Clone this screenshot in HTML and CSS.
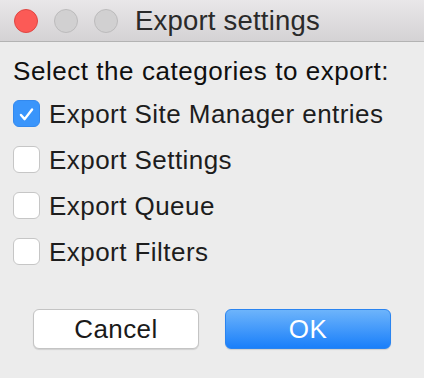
FILE: index.html
```html
<!DOCTYPE html>
<html lang="en">
<head>
  <meta charset="UTF-8" />
  <title>Export settings</title>
  <link rel="stylesheet" href="styles.css">
</head>
<body>
  <div class="window">
    <div class="titlebar">
      <div class="lights">
        <span class="light close"></span>
        <span class="light"></span>
        <span class="light"></span>
      </div>
      <div class="title">Export settings</div>
    </div>

    <div class="content">
      <p class="prompt">Select the categories to export:</p>
      <label class="option">
        <span class="box checked">
          <svg viewBox="0 0 27 27" width="27" height="27"><path d="M7.5 14 L11.5 18.5 L19.5 8" fill="none" stroke="#fff" stroke-width="2.6" stroke-linecap="round" stroke-linejoin="round"/></svg>
        </span>
        Export Site Manager entries
      </label>
      <label class="option"><span class="box"></span>Export Settings</label>
      <label class="option"><span class="box"></span>Export Queue</label>
      <label class="option"><span class="box"></span>Export Filters</label>

      <div class="buttons">
        <button class="btn">Cancel</button>
        <button class="btn primary">OK</button>
      </div>
    </div>
  </div>
</body>
</html>
```

FILE: styles.css
```css
* {
  box-sizing: border-box;
}

body {
  margin: 0;
  background: #ececec;
  font-family: 'Liberation Sans', Arial, sans-serif;
  color: #1f1f1f;
}

.window {
  width: 424px;
  height: 378px;
  background: #ececec;
  display: flex;
  flex-direction: column;
}

.titlebar {
  height: 42px;
  background: linear-gradient(#e9e7e9, #d4d2d4);
  border-bottom: 1px solid #b3b3b3;
  display: flex;
  align-items: center;
  padding-left: 14px;
}

.lights {
  display: flex;
  gap: 16px;
}

.light {
  width: 24px;
  height: 24px;
  border-radius: 50%;
  background: #d1d0d1;
  border: 1px solid #bcbbbc;
}

.light.close {
  background: #fc5a56;
  border-color: #df4642;
}

.title {
  margin-left: 17px;
  font-size: 27.5px;
  letter-spacing: 0.2px;
  color: #2a2a2a;
}

.content {
  flex: 1;
  padding: 14px 0 0 13px;
}

.prompt {
  margin: 0 0 14px;
  font-size: 26px;
  line-height: 30px;
  letter-spacing: 0.55px;
  color: #0f0f0f;
}

.option {
  display: flex;
  align-items: center;
  gap: 9px;
  height: 27px;
  margin-bottom: 19px;
  font-size: 26px;
  line-height: 30px;
  letter-spacing: 0.45px;
  color: #1d1d1d;
}

.box {
  width: 27px;
  height: 27px;
  flex: none;
  border-radius: 6px;
  background: #fff;
  border: 1px solid #c6c6c6;
  display: flex;
}

.box.checked {
  background: #3a95fb;
  border-color: #3389ee;
}

/* sibling margins collapse, so this covers the whole gap below the last row */
.buttons {
  display: flex;
  gap: 26px;
  margin: 44px 0 0 20px;
}

.btn {
  width: 166px;
  height: 40px;
  border-radius: 6px;
  border: 1px solid #c4c4c4;
  background: #fff;
  font-family: 'Liberation Sans', Arial, sans-serif;
  font-size: 26px;
  letter-spacing: 0.4px;
  color: #1a1a1a;
  box-shadow: 0 1px 1px rgba(0, 0, 0, 0.12);
}

.btn.primary {
  background: linear-gradient(#6db4fb, #1a7ffa);
  border-color: #2a84f0;
  color: #fff;
}
```
